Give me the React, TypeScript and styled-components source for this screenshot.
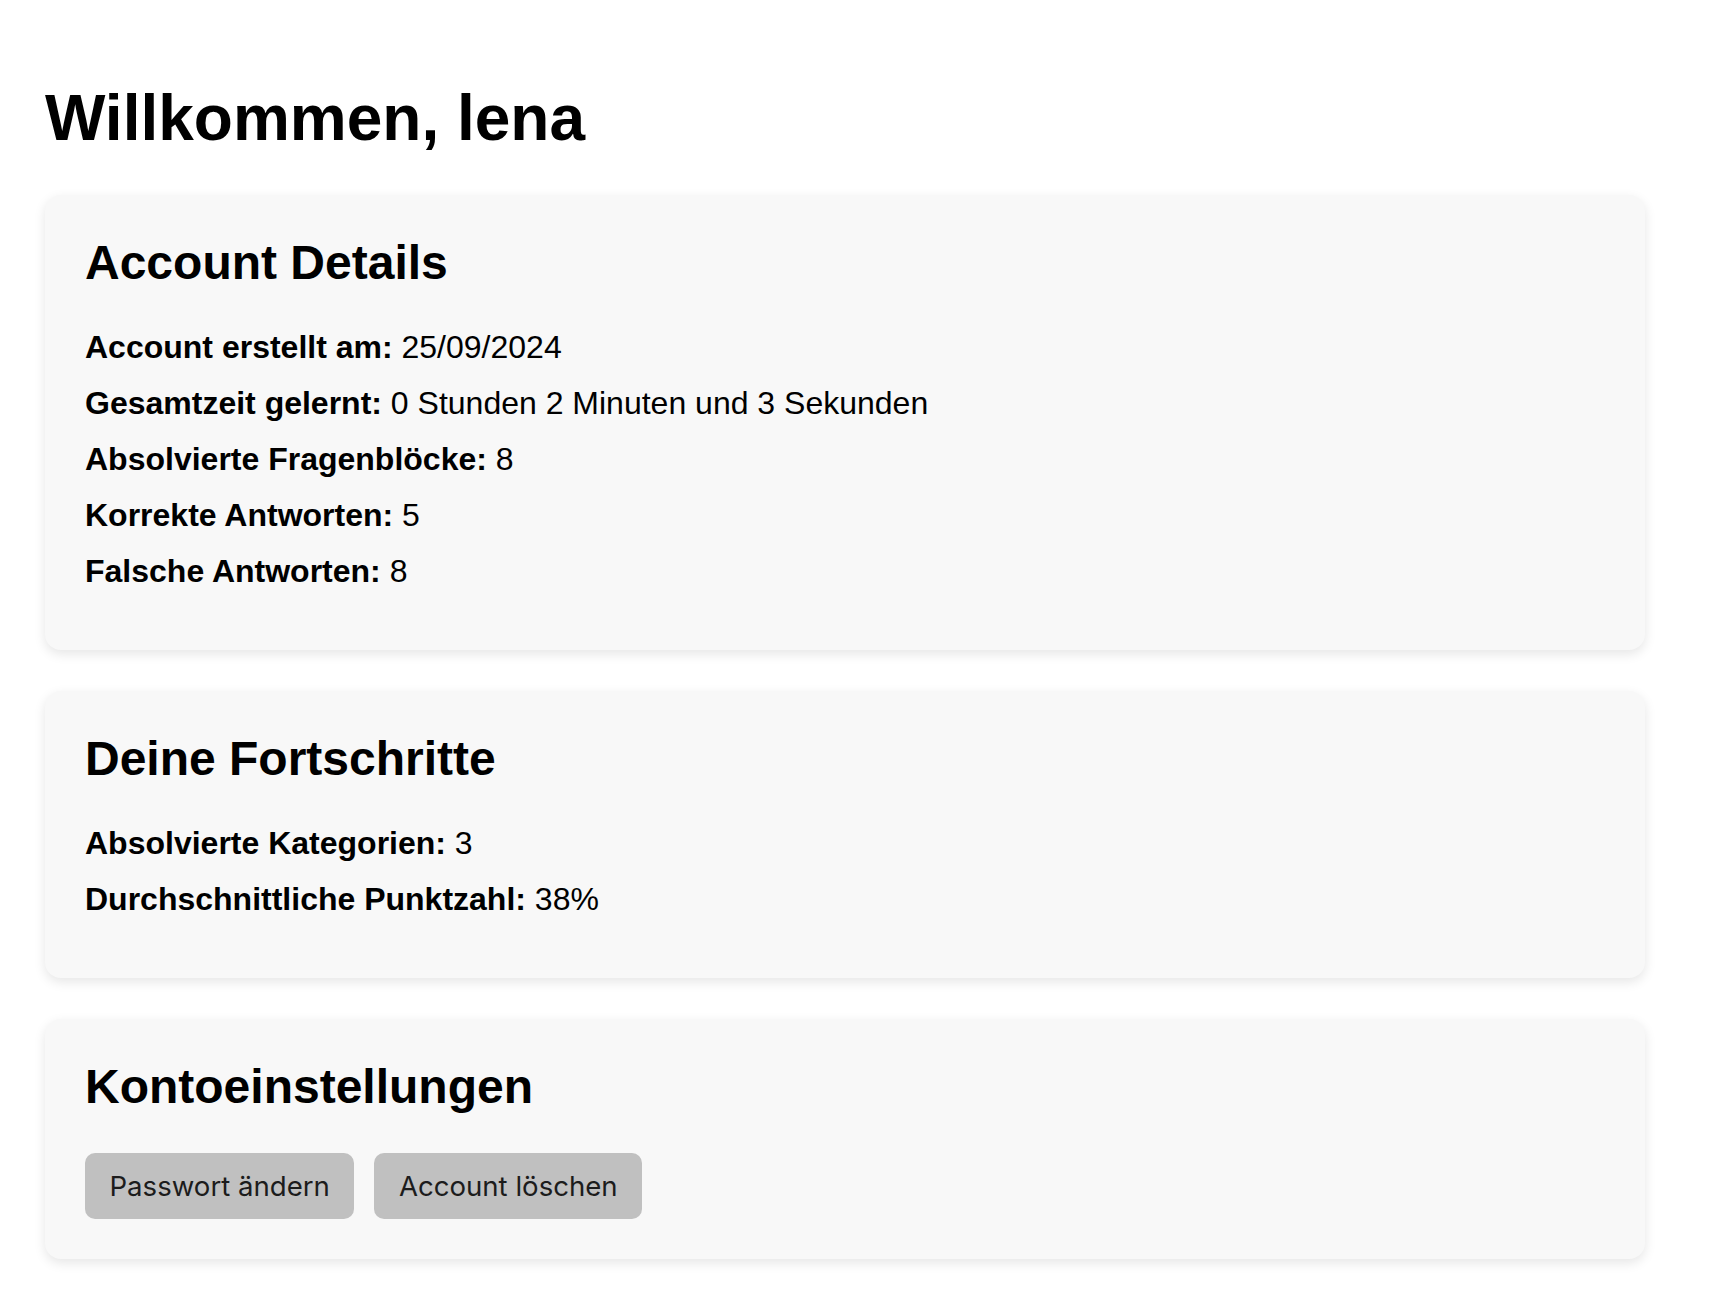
import React from "react";
import styled, { createGlobalStyle } from "styled-components";

const GlobalStyle = createGlobalStyle`
  html, body {
    margin: 0;
    padding: 0;
    background: #ffffff;
  }
  body {
    font-family: "Liberation Sans", Arial, Helvetica, sans-serif;
    color: #000000;
  }
`;

const Page = styled.main`
  width: 1600px;
  margin-left: 45px;
  padding: 81px 0 40px;
  display: flex;
  flex-direction: column;
  gap: 41px;
`;

const Title = styled.h1`
  margin: 0 0 -1px;
  font-size: 64px;
  font-weight: 700;
  line-height: normal;
`;

const Card = styled.section`
  background: #f8f8f8;
  border-radius: 16px;
  box-shadow: 0 4px 12px rgba(0, 0, 0, 0.1);
  padding: 40px;
`;

const CardTitle = styled.h2`
  margin: 0;
  font-size: 48px;
  font-weight: 700;
  line-height: normal;
`;

const List = styled.div`
  display: flex;
  flex-direction: column;
  gap: 20px;
  margin: 39px 0 21px;
`;

const Row = styled.p`
  margin: 0;
  font-size: 32px;
  line-height: 36px;
`;

const Label = styled.strong`
  font-weight: 700;
`;

const Actions = styled.div`
  display: flex;
  gap: 20px;
  margin-top: 39px;
`;

const Button = styled.button`
  height: 66px;
  padding: 0 24.5px;
  border: none;
  border-radius: 10px;
  background: #c0c0c0;
  color: #1c1c1c;
  font-family: Inter, "Noto Sans", sans-serif;
  font-size: 27.6px;
  cursor: pointer;
`;

const details = [
  ["Account erstellt am:", "25/09/2024"],
  ["Gesamtzeit gelernt:", "0 Stunden 2 Minuten und 3 Sekunden"],
  ["Absolvierte Fragenblöcke:", "8"],
  ["Korrekte Antworten:", "5"],
  ["Falsche Antworten:", "8"],
];

const progress = [
  ["Absolvierte Kategorien:", "3"],
  ["Durchschnittliche Punktzahl:", "38%"],
];

export default function App() {
  return (
    <>
      <GlobalStyle />
      <Page>
        <Title>Willkommen, lena</Title>
        <Card>
          <CardTitle>Account Details</CardTitle>
          <List>
            {details.map(([l, v]) => (
              <Row key={l}>
                <Label>{l}</Label> {v}
              </Row>
            ))}
          </List>
        </Card>
        <Card>
          <CardTitle>Deine Fortschritte</CardTitle>
          <List>
            {progress.map(([l, v]) => (
              <Row key={l}>
                <Label>{l}</Label> {v}
              </Row>
            ))}
          </List>
        </Card>
        <Card>
          <CardTitle>Kontoeinstellungen</CardTitle>
          <Actions>
            <Button>Passwort ändern</Button>
            <Button>Account löschen</Button>
          </Actions>
        </Card>
      </Page>
    </>
  );
}
